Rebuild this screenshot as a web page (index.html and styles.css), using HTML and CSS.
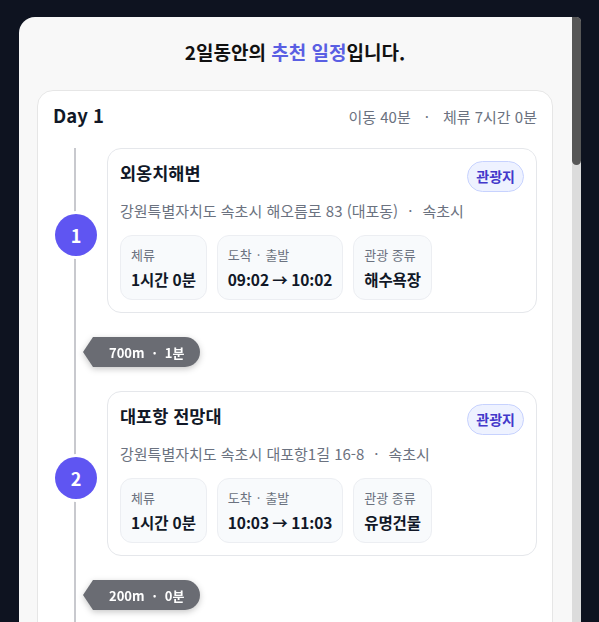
FILE: index.html
```html
<!DOCTYPE html>
<html lang="ko">
<head>
<meta charset="utf-8">
<title>추천 일정</title>
<link rel="stylesheet" href="styles.css">
</head>
<body>
<div class="window">
  <div class="panel">
    <h1 class="title">2일동안의 <span class="accent">추천 일정</span>입니다.</h1>

    <section class="day">
      <header class="day-head">
        <h2>Day 1</h2>
        <div class="day-meta"><span>이동 40분</span><span class="sep">·</span><span>체류 7시간 0분</span></div>
      </header>
      <ol class="timeline">
        <li class="stop">
          <div class="marker"><span class="num">1</span></div>
          <article class="place">
            <div class="place-head"><h3>외옹치해변</h3><span class="badge">관광지</span></div>
            <p class="addr"><span>강원특별자치도 속초시 해오름로 83 (대포동)</span><span class="dot">·</span><span>속초시</span></p>
            <div class="stats">
              <div class="stat"><span class="label">체류</span><span class="value">1시간 0분</span></div>
              <div class="stat"><span class="label">도착<span class="dot-sm">·</span>출발</span><span class="value">09:02 → 10:02</span></div>
              <div class="stat"><span class="label">관광 종류</span><span class="value">해수욕장</span></div>
            </div>
          </article>
        </li>
        <li class="leg"><span class="pill">700m<span class="sep">·</span>1분</span></li>
        <li class="stop">
          <div class="marker"><span class="num">2</span></div>
          <article class="place">
            <div class="place-head"><h3>대포항 전망대</h3><span class="badge">관광지</span></div>
            <p class="addr"><span>강원특별자치도 속초시 대포항1길 16-8</span><span class="dot">·</span><span>속초시</span></p>
            <div class="stats">
              <div class="stat"><span class="label">체류</span><span class="value">1시간 0분</span></div>
              <div class="stat"><span class="label">도착<span class="dot-sm">·</span>출발</span><span class="value">10:03 → 11:03</span></div>
              <div class="stat"><span class="label">관광 종류</span><span class="value">유명건물</span></div>
            </div>
          </article>
        </li>
        <li class="leg"><span class="pill">200m<span class="sep">·</span>0분</span></li>
      </ol>
    </section>
  </div>
  <div class="scrollbar"><div class="thumb"></div></div>
</div>
</body>
</html>
```
FILE: styles.css
```css
* {
  box-sizing: border-box;
  margin: 0;
  padding: 0;
}

html,
body {
  height: 100%;
  overflow: hidden;
}

body {
  background: #0e1320;
  font-family: "Noto Sans CJK KR", "Noto Sans", sans-serif;
  padding: 17px 18px 0 19px;
  color: #111827;
}

.window {
  display: flex;
  width: 562px;
  height: 640px;
}

.panel {
  flex: 1;
  min-width: 0;
  overflow: hidden;
  background: #f8f8f8;
  border-radius: 16px 0 0 16px;
  padding: 21px 19px 24px 18px;
}

.scrollbar {
  flex: none;
  width: 9px;
  background: #dcdcdc;
  border-radius: 0 5px 0 0;
}

.thumb {
  height: 148px;
  background: #575757;
  border-radius: 0 5px 5px 5px;
}

.title {
  font-size: 19px;
  line-height: 28px;
  font-weight: 700;
  text-align: center;
  color: #111;
}

.accent {
  color: #5a5fe3;
}

.day {
  margin-top: 24px;
  background: #fff;
  border: 1px solid #e6e6e6;
  border-radius: 16px;
  padding: 11px 15px 16px;
}

.day-head {
  display: flex;
  justify-content: space-between;
  align-items: baseline;
}

.day-head h2 {
  font-size: 18.5px;
  line-height: 27px;
  font-weight: 700;
  color: #111827;
}

.day-meta {
  font-size: 15px;
  line-height: 22px;
  color: #6b7280;
}

.day-meta .sep {
  margin: 0 14px;
}

.timeline {
  list-style: none;
  position: relative;
  margin-top: 19px;
}

.timeline::before {
  content: "";
  position: absolute;
  left: 21px;
  top: 0;
  bottom: 0;
  width: 2px;
  background: #c8c9ce;
}

.stop {
  display: flex;
  gap: 8px;
}

.marker {
  flex: none;
  width: 46px;
  display: flex;
  align-items: center;
  justify-content: center;
  padding-top: 9px;
  position: relative;
  z-index: 1;
}

.num {
  width: 42px;
  height: 42px;
  border-radius: 50%;
  background: #5f55f2;
  color: #fff;
  font-size: 18px;
  font-weight: 700;
  display: flex;
  align-items: center;
  justify-content: center;
  box-shadow: 0 0 0 3px #fff;
}

.place {
  flex: 1;
  background: #fff;
  border: 1px solid #e5e7eb;
  border-radius: 14px;
  padding: 12px;
}

.place-head {
  display: flex;
  justify-content: space-between;
  align-items: flex-start;
}

.place-head h3 {
  font-size: 17.5px;
  line-height: 24px;
  font-weight: 700;
  color: #111827;
}

.badge {
  font-size: 14px;
  line-height: 29px;
  font-weight: 700;
  padding: 0 8px;
  border-radius: 999px;
  background: #eef2ff;
  border: 1px solid #c7d2fe;
  color: #4338ca;
}

.addr {
  margin-top: 8px;
  font-size: 15px;
  line-height: 22px;
  color: #6b7280;
  white-space: nowrap;
}

.addr .dot {
  margin: 0 10px;
}

.stats {
  display: flex;
  gap: 10px;
  margin-top: 13px;
}

.stat {
  display: flex;
  flex-direction: column;
  gap: 3px;
  padding: 9px 10px 8px;
  background: #f8fafc;
  border: 1px solid #eceef2;
  border-radius: 12px;
}

.label {
  font-size: 13px;
  line-height: 19px;
  color: #6b7280;
}

.dot-sm {
  margin: 0 5px;
}

.value {
  font-size: 15.5px;
  line-height: 24px;
  font-weight: 700;
  color: #111827;
  letter-spacing: -0.1px;
}

.leg {
  padding: 24px 0 24px 30px;
}

.pill {
  position: relative;
  display: inline-flex;
  align-items: center;
  height: 30px;
  margin-left: 10px;
  padding: 0 16px;
  background: #6a6c73;
  color: #fff;
  font-size: 13px;
  font-weight: 700;
  border-radius: 0 15px 15px 0;
  filter: drop-shadow(0 2px 3px rgba(0, 0, 0, 0.22));
}

.pill::before {
  content: "";
  position: absolute;
  left: -10px;
  top: 0;
  border-right: 10px solid #6a6c73;
  border-top: 15px solid transparent;
  border-bottom: 15px solid transparent;
}

.pill .sep {
  margin: 0 8px;
}
```
